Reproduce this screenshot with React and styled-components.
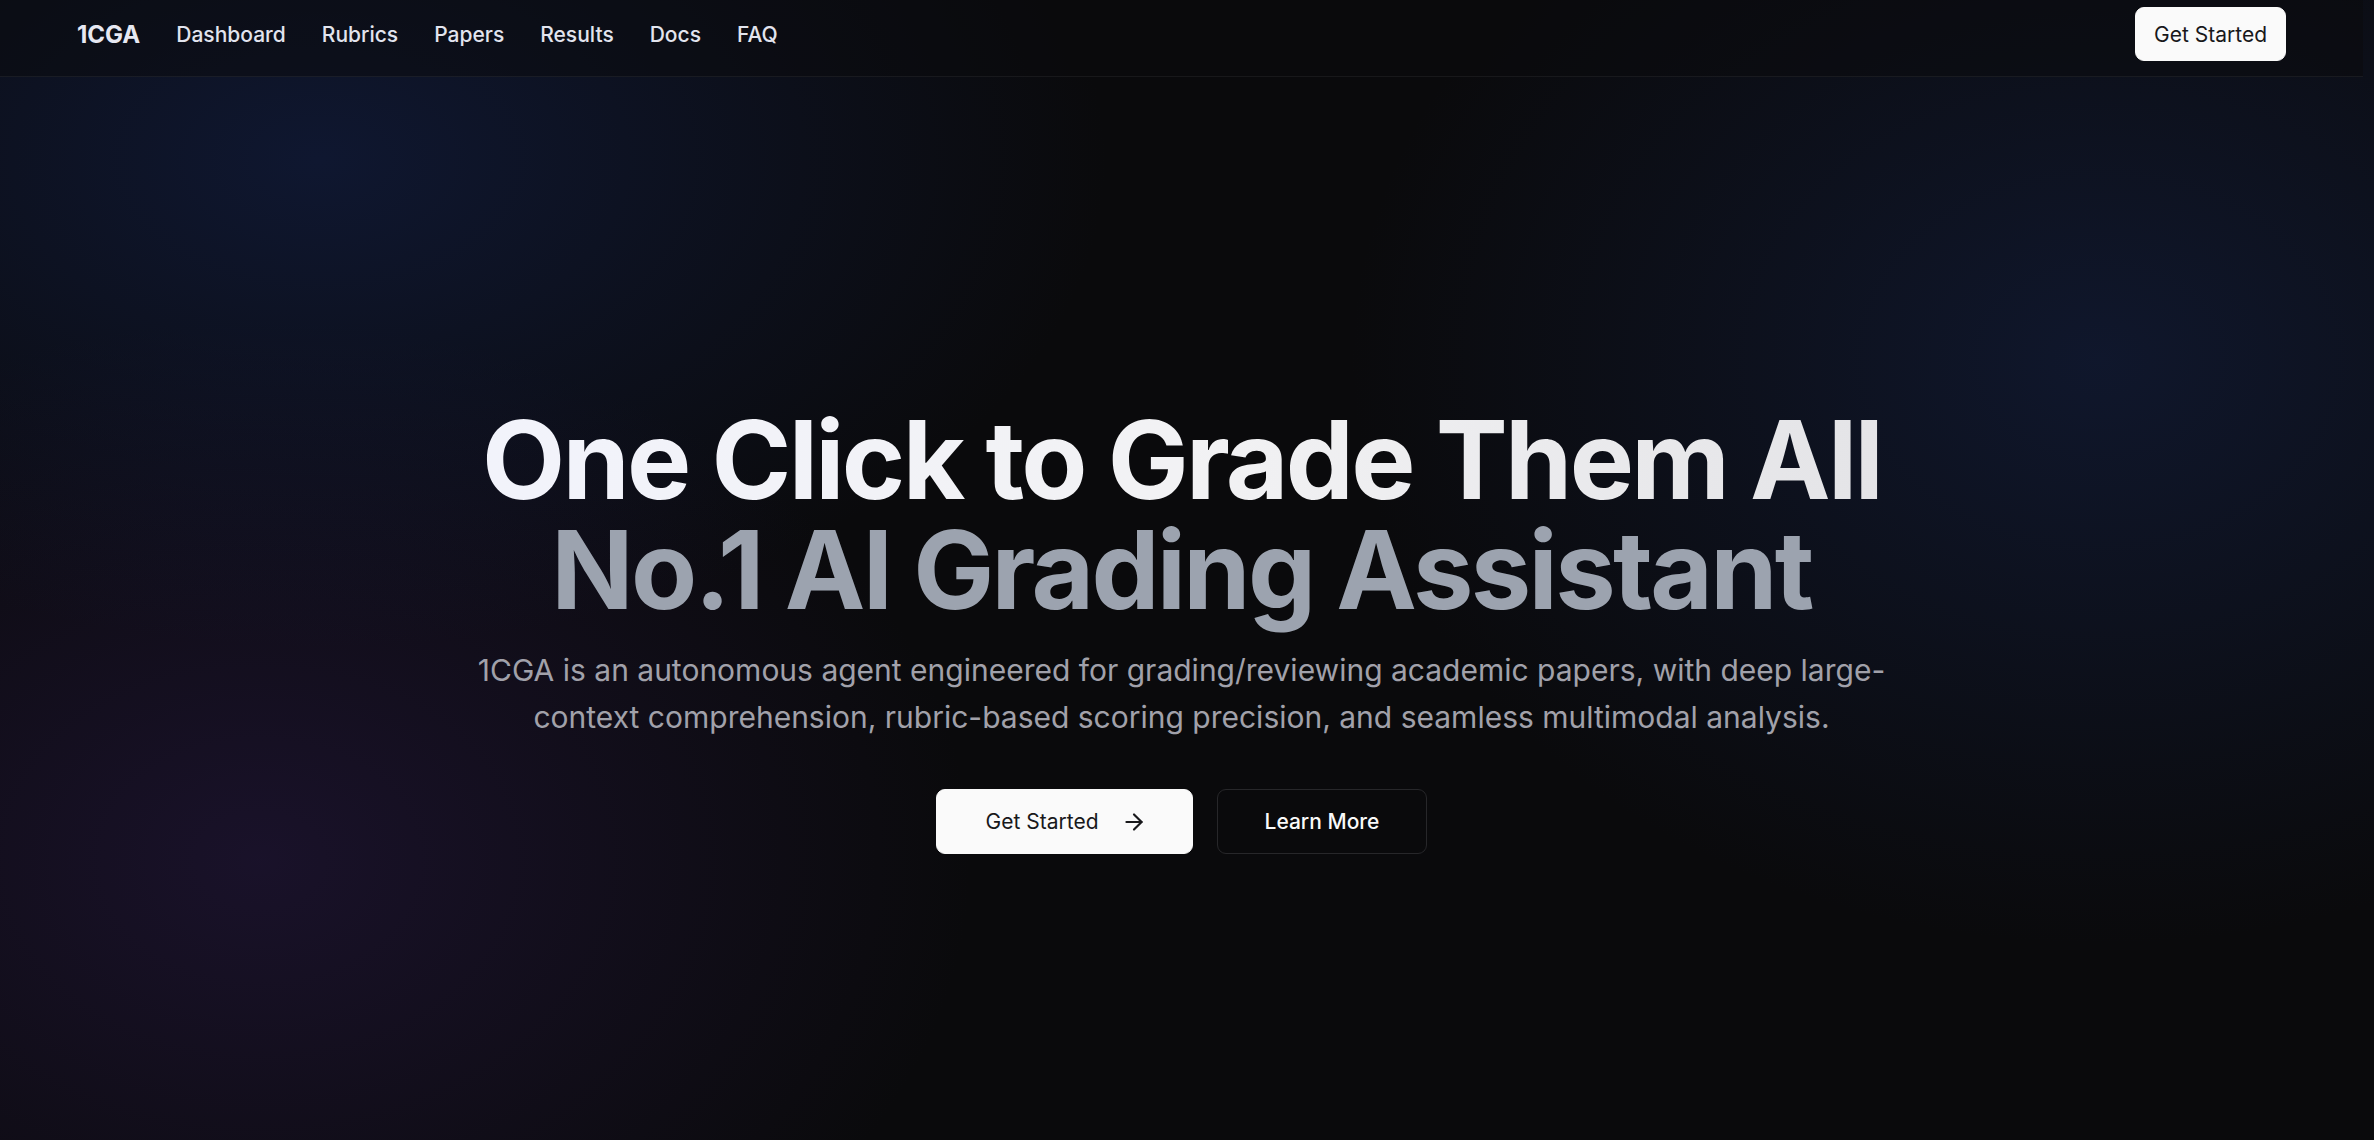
import React from 'react';
import styled, { createGlobalStyle } from 'styled-components';
import { ArrowRight } from 'lucide-react';

const GlobalStyle = createGlobalStyle`
  * { box-sizing: border-box; }
  html, body {
    margin: 0;
    padding: 0;
    background: #0a0a0c;
  }
  body {
    font-family: 'Inter', 'Noto Sans', sans-serif;
    -webkit-font-smoothing: antialiased;
  }
`;

const Page = styled.div`
  min-height: 1140px;
  display: flex;
  flex-direction: column;
  padding-right: 11px;
  background:
    radial-gradient(ellipse 1050px 650px at 320px 160px, rgba(20, 36, 84, 0.5), transparent 75%),
    radial-gradient(ellipse 950px 720px at 260px 860px, rgba(42, 26, 74, 0.48), transparent 75%),
    radial-gradient(ellipse 1000px 780px at 2100px 360px, rgba(22, 38, 82, 0.46), transparent 75%),
    #0a0a0c;
  overflow: hidden;
`;

const NavBar = styled.header`
  height: 77px;
  display: flex;
  align-items: center;
  justify-content: space-between;
  padding: 0 77px 8px;
  background: rgba(10, 10, 12, 0.5);
  border-bottom: 1px solid rgba(255, 255, 255, 0.06);
`;

const NavLeft = styled.nav`
  display: flex;
  align-items: center;
  gap: 36px;
`;

const Logo = styled.div`
  font-size: 24px;
  font-weight: 700;
  color: #e6e8f2;
`;

const NavLink = styled.a`
  font-size: 21px;
  font-weight: 500;
  color: #e2e4ee;
  text-decoration: none;
  cursor: pointer;
`;

const Button = styled.button`
  display: inline-flex;
  align-items: center;
  justify-content: center;
  gap: ${(p) => p.$gap || 0}px;
  height: ${(p) => (p.$small ? 54 : 65)}px;
  padding: ${(p) => p.$pad || '0 48px'};
  border-radius: 9px;
  font-family: 'Inter', sans-serif;
  font-size: 21px;
  font-weight: ${(p) => (p.$outline ? 500 : 400)};
  white-space: nowrap;
  cursor: pointer;
  background: ${(p) => (p.$outline ? '#0a0a0c' : '#fafafa')};
  color: ${(p) => (p.$outline ? '#fafafa' : '#18181b')};
  border: 1px solid ${(p) => (p.$outline ? '#27272a' : '#fafafa')};
`;

const Hero = styled.main`
  display: flex;
  flex-direction: column;
  align-items: center;
  padding-top: 328px;
  text-align: center;
`;

const Title = styled.h1`
  margin: 0;
  font-size: 108px;
  line-height: 110px;
  font-weight: 700;
  letter-spacing: -0.025em;
`;

const TitleLine = styled.span`
  display: block;
  ${(p) =>
    p.$muted
      ? `color: #9ca3af;`
      : `background: linear-gradient(90deg, #f2f3fb 0%, #f2f2f4 50%, #e4e4e7 100%);
         -webkit-background-clip: text;
         background-clip: text;
         color: transparent;`}
`;

const Lead = styled.p`
  margin: 22px 0 0;
  max-width: 1420px;
  font-size: 30px;
  line-height: 47px;
  color: #a1a1aa;
`;

const Actions = styled.div`
  display: flex;
  gap: 24px;
  margin-top: 48px;
`;

export default function App() {
  const links = ['Dashboard', 'Rubrics', 'Papers', 'Results', 'Docs', 'FAQ'];
  return (
    <Page>
      <GlobalStyle />
      <NavBar>
        <NavLeft>
          <Logo>1CGA</Logo>
          {links.map((l) => (
            <NavLink key={l}>{l}</NavLink>
          ))}
        </NavLeft>
        <Button $small $pad="0 18px">Get Started</Button>
      </NavBar>
      <Hero>
        <Title>
          <TitleLine>One Click to Grade Them All</TitleLine>
          <TitleLine $muted>No.1 AI Grading Assistant</TitleLine>
        </Title>
        <Lead>
          1CGA is an autonomous agent engineered for grading/reviewing academic papers, with deep large-context
          comprehension, rubric-based scoring precision, and seamless multimodal analysis.
        </Lead>
        <Actions>
          <Button $gap={22} $pad="0 45px 0 49px">
            Get Started
            <ArrowRight size={26} strokeWidth={2} />
          </Button>
          <Button $outline $pad="0 47px">Learn More</Button>
        </Actions>
      </Hero>
    </Page>
  );
}
